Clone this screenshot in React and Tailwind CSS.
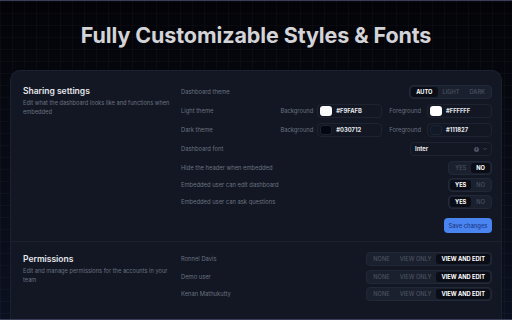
import React from 'react';
import { ChevronDown } from 'lucide-react';

const font = { fontFamily: 'Inter, "Noto Sans", sans-serif' };

function Segmented({ options, active }) {
    return (
        <div className="flex h-[14px] items-stretch rounded-[4px] border border-[#212838] bg-[#1a202d] p-px leading-none">
            {options.map((o) => (
                <div
                    key={o}
                    className={
                        o === active
                            ? 'flex items-center rounded-[3px] bg-[#0a0d16] px-[5px] text-[5.7px] font-bold text-white'
                            : 'flex items-center px-[5px] text-[5.7px] font-medium text-[#4a5263]'
                    }
                >
                    {o}
                </div>
            ))}
        </div>
    );
}

function ColorField({ swatch, value, border }) {
    return (
        <div className="flex h-[14px] w-[65px] items-center gap-[4px] rounded-[4px] border border-[#1d2331] px-[2px] leading-none">
            <div className={`h-[10px] w-[12px] rounded-[3px] ${swatch} ${border ? 'border border-[#1d2331]' : ''}`}></div>
            <span className="text-[5.8px] font-bold text-[#e5e7eb]">{value}</span>
        </div>
    );
}

function Label({ children }) {
    return <span className="text-[5.8px] leading-none text-[#6b7280]">{children}</span>;
}

function App() {
    return (
        <div
            style={font}
            className="relative h-[320px] w-[512px] overflow-hidden border-y border-[#3c3d58] bg-[linear-gradient(180deg,#030307_0%,#070a13_40%,#0b1020_100%)]"
        >
            <div className="pointer-events-none absolute inset-0 bg-[linear-gradient(#ffffff06_1px,transparent_1px),linear-gradient(90deg,#ffffff06_1px,transparent_1px)] bg-[size:12px_12px]"></div>

            <div className="relative flex h-[69px] items-center justify-center pb-[1px]">
                <h1 className="text-[21.5px] font-bold tracking-[-0.1px] text-[#d4d4d8]">Fully Customizable Styles &amp; Fonts</h1>
            </div>

            <main className="relative mx-[10px] h-[260px] rounded-t-[10px] border border-b-0 border-[#1c2130] bg-[#121723]">
                <section className="flex pl-[12px] pr-[9px] pt-[14px] pb-[8px]">
                    <div className="w-[158px] shrink-0 pt-[1px]">
                        <h2 className="text-[8.5px] font-semibold leading-[11px] text-[#e5e7eb]">Sharing settings</h2>
                        <p className="mt-[1px] whitespace-nowrap text-[5.7px] leading-[9px] text-[#6b7280]">
                            Edit what the dashboard looks like and functions when
                            <br />
                            embedded
                        </p>
                    </div>

                    <div className="flex flex-1 flex-col">
                        <div className="flex flex-col gap-[5px]">
                            <div className="flex h-[14px] items-center justify-between">
                                <Label>Dashboard theme</Label>
                                <Segmented options={['AUTO', 'LIGHT', 'DARK']} active="AUTO" />
                            </div>
                            <div className="flex h-[14px] items-center">
                                <div className="flex flex-1 items-center"><Label>Light theme</Label></div>
                                <Label>Background</Label>
                                <div className="ml-[4px]"><ColorField swatch="bg-[#f9fafb]" value="#F9FAFB" /></div>
                                <div className="ml-[7px] flex items-center"><Label>Foreground</Label></div>
                                <div className="ml-[6px]"><ColorField swatch="bg-white" value="#FFFFFF" /></div>
                            </div>
                            <div className="flex h-[14px] items-center">
                                <div className="flex flex-1 items-center"><Label>Dark theme</Label></div>
                                <Label>Background</Label>
                                <div className="ml-[4px]"><ColorField swatch="bg-[#030712]" value="#030712" border /></div>
                                <div className="ml-[7px] flex items-center"><Label>Foreground</Label></div>
                                <div className="ml-[6px]"><ColorField swatch="bg-[#111827]" value="#111827" border /></div>
                            </div>
                            <div className="flex h-[14px] items-center justify-between">
                                <Label>Dashboard font</Label>
                                <div className="flex h-[14px] w-[82px] items-center rounded-[4px] border border-[#1d2331] pl-[4px] pr-[3px] leading-none">
                                    <span className="flex-1 text-[5.8px] font-bold text-[#e5e7eb]">Inter</span>
                                    <div className="flex h-[5px] w-[5px] items-center justify-center rounded-full bg-[#4b5263]">
                                        <div className="h-[1.5px] w-[1.5px] rounded-full bg-[#121723]"></div>
                                    </div>
                                    <ChevronDown className="ml-[3px] h-[6px] w-[6px] text-[#4b5263]" strokeWidth={3} />
                                </div>
                            </div>
                        </div>

                        <div className="mt-[5px] flex flex-col gap-[4px]">
                            <div className="flex h-[13px] items-center justify-between">
                                <Label>Hide the header when embedded</Label>
                                <Segmented options={['YES', 'NO']} active="NO" />
                            </div>
                            <div className="flex h-[13px] items-center justify-between">
                                <Label>Embedded user can edit dashboard</Label>
                                <Segmented options={['YES', 'NO']} active="YES" />
                            </div>
                            <div className="flex h-[13px] items-center justify-between">
                                <Label>Embedded user can ask questions</Label>
                                <Segmented options={['YES', 'NO']} active="YES" />
                            </div>
                        </div>

                        <div className="mt-[10px] flex justify-end">
                            <button className="flex h-[15px] w-[48px] items-center justify-center rounded-[4px] bg-[#4a84f0] text-[5.8px] font-medium leading-none text-[#1b3c8c]">
                                Save changes
                            </button>
                        </div>
                    </div>
                </section>

                <div className="h-px bg-[#1c2130]"></div>

                <section className="flex pl-[12px] pr-[9px] pt-[10px]">
                    <div className="w-[158px] shrink-0 pt-[2px]">
                        <h2 className="text-[8.5px] font-semibold leading-[11px] text-[#e5e7eb]">Permissions</h2>
                        <p className="mt-[1px] whitespace-nowrap text-[5.7px] leading-[9px] text-[#6b7280]">
                            Edit and manage permissions for the accounts in your
                            <br />
                            team
                        </p>
                    </div>
                    <div className="flex flex-1 flex-col gap-[3.5px]">
                        {['Ronnel Davis', 'Demo user', 'Kenan Mathukutty'].map((n) => (
                            <div key={n} className="flex h-[14px] items-center justify-between">
                                <Label>{n}</Label>
                                <Segmented options={['NONE', 'VIEW ONLY', 'VIEW AND EDIT']} active="VIEW AND EDIT" />
                            </div>
                        ))}
                    </div>
                </section>
            </main>
        </div>
    );
}

export default App;
